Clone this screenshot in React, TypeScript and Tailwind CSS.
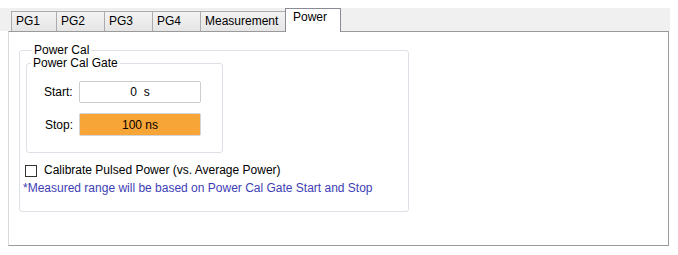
export default function App() {
  const tabs = [
    { label: 'PG1', w: 'w-[46px]' },
    { label: 'PG2', w: 'w-[49px]' },
    { label: 'PG3', w: 'w-[49px]' },
    { label: 'PG4', w: 'w-[49px]' },
    { label: 'Measurement', w: 'w-[86px]' },
  ];

  return (
    <div className="w-[678px] h-[255px] bg-white pt-[8px] font-['Liberation_Sans',Arial,sans-serif] text-[12px] text-black">
      {/* tab strip */}
      <div className="h-[23px] w-[670px] bg-[#f0f0f0] flex items-end pl-[11px]">
        {tabs.map((t, i) => (
          <div
            key={t.label}
            className={`${t.w} ${i === 0 ? '' : '-ml-px'} h-[20px] pl-[4px] pt-[2px] border border-b-0 border-[#acacac] bg-gradient-to-b from-[#f3f3f3] to-[#e5e5e5] leading-[15px] whitespace-nowrap`}
          >
            {t.label}
          </div>
        ))}
        <div className="relative z-10 w-[56px] h-[24px] -mb-px -ml-px pl-[7px] pt-[1px] border border-b-0 border-[#898c95] bg-white leading-[15px]">
          Power
        </div>
      </div>

      {/* tab page */}
      <div className="ml-[8px] w-[661px] h-[215px] border border-[#9a9a9a] border-l-[#dadada] bg-white pt-[12px] pl-[10px]">
        <fieldset className="w-[390px] h-[168px] border border-[#dce0e7] rounded-[3px] px-[5px]">
          <legend className="ml-[7px] px-[2px] leading-[13px]">Power Cal</legend>

          <fieldset className="ml-[1px] w-[197px] h-[96px] border border-[#dce0e7] rounded-[3px]">
            <legend className="ml-[4px] px-[2px] leading-[13px]">Power Cal Gate</legend>
            <div className="flex flex-col gap-[10px] pl-[17px] mt-[11px]">
              <div className="flex items-center">
                <span className="w-[35px]">Start:</span>
                <div className="w-[122px] h-[22px] border border-[#cdcdcd] rounded-[2px] bg-white flex items-center justify-center whitespace-pre">
                  0  s
                </div>
              </div>
              <div className="flex items-center">
                <span className="w-[35px] pl-px">Stop:</span>
                <div className="w-[122px] h-[23px] border border-[#d4d4d4] rounded-[2px] bg-[#f8a537] flex items-center justify-center">
                  100 ns
                </div>
              </div>
            </div>
          </fieldset>

          <label className="mt-[10px] flex items-center gap-[7px] leading-[15px]">
            <span className="w-[12px] h-[12px] border border-[#333333] bg-white" />
            <span>Calibrate Pulsed Power (vs. Average Power)</span>
          </label>
          <div className="mt-[3px] -ml-[2px] text-[#3d3db5] leading-[15px]">
            *Measured range will be based on Power Cal Gate Start and Stop
          </div>
        </fieldset>
      </div>
    </div>
  );
}
